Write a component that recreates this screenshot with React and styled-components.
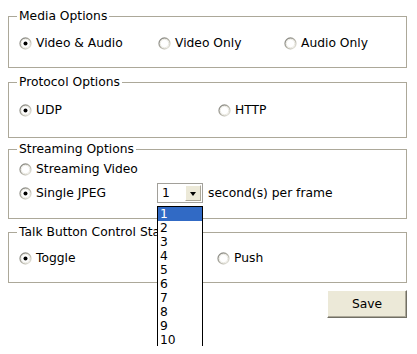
import React, { useId } from "react";
import styled, { createGlobalStyle } from "styled-components";

const GlobalStyle = createGlobalStyle`
  html { height: 100%; padding: 0; background: #fff; }
  body {
    margin: 8px;
    padding: 0;
    min-height: 338px;
    background: #fff;
    font-family: "DejaVu Sans", Verdana, sans-serif;
    font-size: 12.3px;
    color: #000;
  }
  #root { min-height: 338px; }
`;

const Page = styled.form`
  width: 399px;
  min-height: 338px;
  display: flex;
  flex-direction: column;
  position: relative;
`;

const Group = styled.fieldset`
  margin: ${(p) => p.$mt}px 0 0;
  border: 1px solid #aca899;
  padding: ${(p) => p.$pt}px 0 ${(p) => p.$pb}px 10px;
  min-width: 0;
  position: relative;
  z-index: ${(p) => p.$z || 0};
`;

const Legend = styled.legend`
  margin-left: -2px;
  padding: 0 2px;
  line-height: 16px;
  font-size: 12.3px;
`;

const Row = styled.div`
  display: grid;
  grid-template-columns: ${(p) => p.$cols};
  align-items: center;
  height: ${(p) => p.$h || 16}px;
  margin-top: ${(p) => p.$mt || 0}px;
`;

const Option = styled.label`
  display: flex;
  align-items: center;
  white-space: nowrap;
  line-height: 16px;
`;

const RadioIcon = styled.svg`
  width: 13px;
  height: 13px;
  margin-right: 4px;
  flex: none;
`;

function Radio({ checked }) {
  const id = useId().replace(/:/g, "");
  return (
    <RadioIcon viewBox="0 0 13 13">
      <defs>
        <linearGradient id={`g${id}`} x1="0" y1="0" x2="1" y2="1">
          <stop offset="0" stopColor="#7d7d78" />
          <stop offset="0.55" stopColor="#b5b3a8" />
          <stop offset="1" stopColor="#f2f1ea" />
        </linearGradient>
      </defs>
      <circle cx="6.5" cy="6.5" r="5.5" fill="#fff" stroke={`url(#g${id})`} strokeWidth="1.3" />
      <circle cx="6.5" cy="6.5" r="4.2" fill="none" stroke="#e6e4dc" strokeWidth="0.8" />
      {checked && <circle cx="6.5" cy="6.5" r="2" fill="#000" />}
    </RadioIcon>
  );
}

const Opt = ({ checked, children }) => (
  <Option>
    <Radio checked={checked} />
    {children}
  </Option>
);

const SelectWrap = styled.div`
  display: flex;
  align-items: center;
  gap: 5px;
  white-space: nowrap;
`;

const SelectBox = styled.div`
  position: relative;
  box-sizing: border-box;
  width: 46px;
  height: 20px;
  border: 1px solid #a2a09a;
  background: #fff;
  display: flex;
  align-items: center;
  justify-content: space-between;
  padding: 1px;
`;

const SelectValue = styled.span`
  padding-left: 3px;
  line-height: 16px;
`;

const SelectButton = styled.span`
  box-sizing: border-box;
  width: 16px;
  height: 16px;
  background: #ece9d8;
  border: 1px solid;
  border-color: #fff #aca899 #aca899 #fff;
  display: flex;
  align-items: center;
  justify-content: center;
`;

const Arrow = styled.span`
  width: 0;
  height: 0;
  border-left: 3.5px solid transparent;
  border-right: 3.5px solid transparent;
  border-top: 4px solid #000;
  margin-top: 1px;
`;

const List = styled.ul`
  position: absolute;
  top: 22px;
  left: -1px;
  box-sizing: border-box;
  width: 46px;
  margin: 0;
  padding: 0;
  list-style: none;
  background: #fff;
  border: 1px solid #000;
  z-index: 10;
`;

const Item = styled.li`
  height: 14px;
  line-height: 14px;
  padding-left: 2px;
  background: ${(p) => (p.$active ? "#316ac5" : "transparent")};
  color: ${(p) => (p.$active ? "#fff" : "#000")};
`;

const Actions = styled.div`
  display: flex;
  justify-content: flex-end;
  margin-top: 7px;
`;

const SaveButton = styled.button`
  box-sizing: border-box;
  width: 80px;
  height: 28px;
  font-family: "DejaVu Sans", Verdana, sans-serif;
  font-size: 12.3px;
  color: #000;
  background: #ece9d8;
  border: 1px solid;
  border-color: #fff #716f64 #716f64 #fff;
  box-shadow: inset -1px -1px 0 #aca899;
  padding: 0;
`;

export default function App() {
  const seconds = [1, 2, 3, 4, 5, 6, 7, 8, 9, 10];
  return (
    <>
      <GlobalStyle />
      <Page>
        <Group $mt={0} $pt={11} $pb={16}>
          <Legend>Media Options</Legend>
          <Row $cols="139px 126px 1fr">
            <Opt checked>Video &amp; Audio</Opt>
            <Opt>Video Only</Opt>
            <Opt>Audio Only</Opt>
          </Row>
        </Group>

        <Group $mt={6} $pt={12} $pb={19}>
          <Legend>Protocol Options</Legend>
          <Row $cols="199px 1fr">
            <Opt checked>UDP</Opt>
            <Opt>HTTP</Opt>
          </Row>
        </Group>

        <Group $mt={3} $pt={4} $pb={15} $z={2}>
          <Legend>Streaming Options</Legend>
          <Row $cols="1fr">
            <Opt>Streaming Video</Opt>
          </Row>
          <Row $cols="138px 1fr" $h={20} $mt={6}>
            <Opt checked>Single JPEG</Opt>
            <SelectWrap>
              <SelectBox>
                <SelectValue>1</SelectValue>
                <SelectButton>
                  <Arrow />
                </SelectButton>
                <List>
                  {seconds.map((n) => (
                    <Item key={n} $active={n === 1}>
                      {n}
                    </Item>
                  ))}
                </List>
              </SelectBox>
              second(s) per frame
            </SelectWrap>
          </Row>
        </Group>

        <Group $mt={5} $pt={10} $pb={16} $z={1}>
          <Legend>Talk Button Control Status</Legend>
          <Row $cols="198px 1fr">
            <Opt checked>Toggle</Opt>
            <Opt>Push</Opt>
          </Row>
        </Group>

        <Actions>
          <SaveButton type="button">Save</SaveButton>
        </Actions>
      </Page>
    </>
  );
}
